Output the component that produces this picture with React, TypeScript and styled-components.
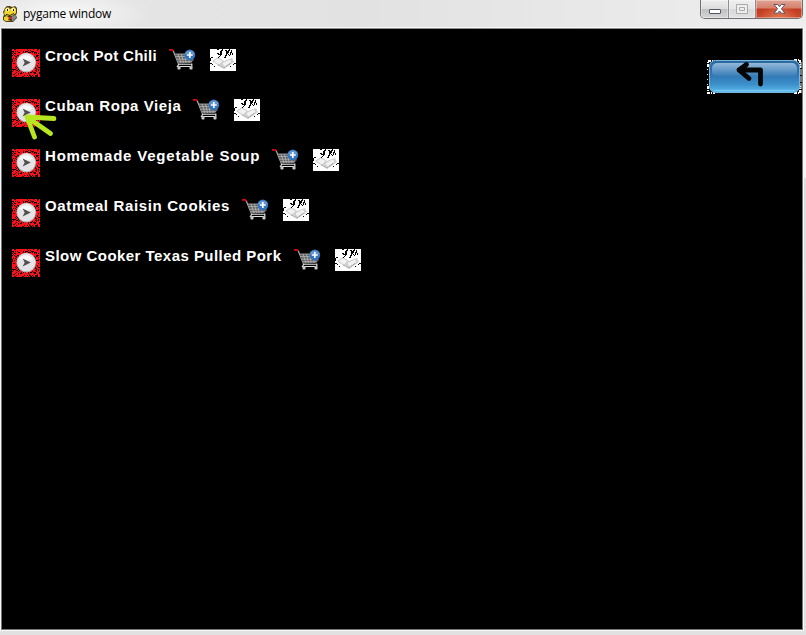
import React from 'react';
import styled, { createGlobalStyle } from 'styled-components';

const GlobalStyle = createGlobalStyle`
  * { box-sizing: border-box; }
  body { margin: 0; background: #e1e1e1; overflow: hidden; }
`;

const Window = styled.div`
  width: 806px;
  height: 635px;
  display: flex;
  flex-direction: column;
  background: linear-gradient(#f0f0f0 0, #f5f5f5 177px, #dcdcdc 179px, #e1e1e1 100%);
`;

const TitleBar = styled.header`
  height: 28px;
  flex: none;
  display: flex;
  align-items: flex-start;
  background:
    radial-gradient(ellipse 85px 24px at 66px 14px, rgba(255, 255, 255, 0.75), rgba(255, 255, 255, 0)),
    linear-gradient(90deg, #e6e6e6, #e2e2e2 45%, #eeeeee);
`;

const AppIcon = styled.svg`
  width: 16px;
  height: 18px;
  margin: 5px 0 0 2px;
`;

const WindowTitle = styled.div`
  margin: 6px auto 0 5px;
  font: 12px/16px "Open Sans", "Noto Sans", sans-serif;
  letter-spacing: -0.22px;
  color: #000;
`;

const Controls = styled.div`
  display: flex;
  width: 103px;
  height: 19px;
  margin-right: 3px;
  border: 1px solid #6e6e74;
  border-top: 0;
  border-radius: 0 0 5px 5px;
  overflow: hidden;
`;

const Control = styled.button<{ $kind: 'minimize' | 'maximize' | 'close' }>`
  width: ${p => (p.$kind === 'close' ? 46 : p.$kind === 'minimize' ? 28 : 27)}px;
  height: 18px;
  padding: 0;
  border: 0;
  border-right: ${p => (p.$kind === 'close' ? '0' : '1px solid #8d8d93')};
  background: ${p =>
    p.$kind === 'close'
      ? 'radial-gradient(ellipse at 50% 110%, #e37b55 0, rgba(220,90,50,0) 60%), linear-gradient(#e0a394 0, #d5806c 45%, #bf3a20 50%, #cf4c2d 100%)'
      : p.$kind === 'maximize'
        ? 'linear-gradient(#eeeeee, #e6e6e6 48%, #d9d9d9 52%, #e2e2e2)'
        : 'linear-gradient(#ededed, #dcdcdc 48%, #c0c0c2 52%, #d5d5d5)'};
  box-shadow: inset 0 0 0 1px rgba(255, 255, 255, 0.35);
  svg { display: block; width: 100%; height: 18px; }
`;

const Client = styled.main`
  width: 802px;
  height: 602px;
  margin-left: 1px;
  border: 1px solid #777;
  border-top-color: #8c8c8c;
  outline: 1px solid #f8f8f8;
  background: #000;
  display: flex;
  justify-content: space-between;
  align-items: flex-start;
`;

const RecipeList = styled.ul`
  list-style: none;
  margin: 0;
  padding: 20px 0 0 10px;
`;

const RecipeRow = styled.li`
  height: 50px;
  display: flex;
  align-items: flex-start;
`;

const PlaySlot = styled.div`
  position: relative;
  width: 28px;
  height: 28px;
  margin-right: 5px;
`;

const PlayIcon = styled.svg`
  display: block;
  width: 28px;
  height: 28px;
`;

const Pointer = styled.svg`
  position: absolute;
  left: 11px;
  top: 14px;
  width: 36px;
  height: 28px;
  z-index: 1;
`;

const RecipeName = styled.span<{ $width: number; $spacing: number }>`
  width: ${p => p.$width}px;
  margin-top: -2px;
  font: bold 15px/18px "Liberation Sans", Arial, sans-serif;
  letter-spacing: ${p => p.$spacing}px;
  white-space: nowrap;
  color: #fff;
`;

const CartIcon = styled.svg`
  width: 28px;
  height: 22px;
`;

const NoteIcon = styled.svg<{ $gap: number }>`
  width: 26px;
  height: 22px;
  margin-left: ${p => p.$gap}px;
`;

const BackButton = styled.button`
  width: 95px;
  height: 36px;
  margin-top: 30px;
  padding: 0;
  border: 0;
  background: none;
  svg { display: block; }
`;

const speckles = (() => {
  let seed = 7261;
  let d = '';
  for (let y = 0; y < 28; y++) {
    for (let x = 0; x < 28; x++) {
      seed = (seed * 1103515245 + 12345) % 2147483648;
      const edge = x < 3 || x > 24 || y < 3 || y > 24;
      if (((seed >> 8) % 100) < (edge ? 24 : 38)) d += `M${x} ${y}h1v1h-1z`;
    }
  }
  return d;
})();

const Play = () => (
  <PlayIcon viewBox="0 0 28 28">
    <path fill="#fb1018" d="M0 0h28v28H0z" />
    <path fill="#170003" shapeRendering="crispEdges" d={speckles} />
    <circle cx="14.3" cy="13.6" r="9.9" fill="#b8b0b2" />
    <circle cx="14.3" cy="13.3" r="9" fill="#e4e4e6" />
    <path fill="#f8f8f8" d="M7 10a8.5 8.5 0 0 1 14 0q-7 3-14 0z" />
    <path fill="#505050" d="M10.6 9.4l8.2 4-8.2 4.2 2.1-4.2z" />
  </PlayIcon>
);

const Cart = () => (
  <CartIcon viewBox="0 0 28 22">
    <path d="M0 .8h2.8l1.7 1.3" stroke="#d80b12" strokeWidth="1.8" fill="none" />
    <path d="M4.3 2l5.4 13.3h13" stroke="#aaa" strokeWidth="1.2" fill="none" />
    <path d="M6 5h15l4 6-3.5 3.2-12 .8z" fill="#606060" />
    <path d="M6 5h14M7 7.6h15M8 10.2h15M9 12.7h14M9 5l3 9M12.5 5l2 9M16 5l1 9M20 5v9" stroke="#b8b8b8" strokeWidth=".8" />
    <path d="M10 14.8l-1.5 2.7h14.3v-3" stroke="#e0e0e0" strokeWidth="1.2" fill="none" />
    <circle cx="10" cy="19" r="1.8" fill="#aaa" /><circle cx="22" cy="19" r="1.8" fill="#aaa" />
    <circle cx="10" cy="19" r=".8" fill="#eee" /><circle cx="22" cy="19" r=".8" fill="#eee" />
    <circle cx="20.8" cy="6" r="5.4" fill="#3474bd" />
    <path d="M15.9 5.3a5.1 5.1 0 0 1 9.8 0q-4-1-9.8 0z" fill="#6296d0" />
    <path d="M17.8 6h6M20.8 3v6" stroke="#fff" strokeWidth="1.7" />
  </CartIcon>
);

const Note = ({ gap }: { gap: number }) => (
  <NoteIcon $gap={gap} viewBox="0 0 26 22">
    <path fill="#fff" d="M0 0h26v22H0z" />
    <path d="M2 12l6-4 6 4 8-3 2 4-10 7z" fill="#d2d2d2" />
    <path d="M3 12l5-3 5 3-4 4zM12 14l8-4 2 3-8 5z" fill="#f2f2f2" stroke="#b5b5b5" strokeWidth=".4" />
    <path d="M8 16l6 3 7-5" stroke="#8a8a8a" strokeWidth=".7" strokeDasharray="2 1" fill="none" />
    <path d="M13 0l-2 3v3l-3 3M8 4l1 2M20 0l-3 4-2 5M16 3h3M18 5l2 2" stroke="#000" strokeWidth="1.4" fill="none" shapeRendering="crispEdges" />
    <path fill="#000" shapeRendering="crispEdges" d="M7 0h2v1H7zM15 1h2v1h-2zM21 1h1v3h-1zM22 4h1v2h-1zM20 3h1v3h-1zM0 9h1v3H0zM1 8h2v1H1zM0 14h2v1H0zM2 15h1v1H2zM24 14h2v1h-2zM23 15h1v1h-1zM4 17h1v1H4zM20 17h1v1h-1z" />
  </NoteIcon>
);

const recipes = [
  { name: 'Crock Pot Chili', width: 124, spacing: 0.3, gap: 13 },
  { name: 'Cuban Ropa Vieja', width: 148, spacing: 0.57, gap: 13 },
  { name: 'Homemade Vegetable Soup', width: 227, spacing: 0.8, gap: 13 },
  { name: 'Oatmeal Raisin Cookies', width: 197, spacing: 0.64, gap: 13 },
  { name: 'Slow Cooker Texas Pulled Pork', width: 249, spacing: 0.46, gap: 13 },
];

export default function App() {
  return (
    <>
      <GlobalStyle />
      <Window>
        <TitleBar>
          <AppIcon viewBox="0 0 16 18">
            <path d="M3 3l2-2h3l2 1 3-1 2 2v5l-1 2 1 3-4 4H4l-3-2v-3l1-2-1-3z" fill="#4a411c" />
            <path d="M3 4l3-2 2 2 4-2 2 2v4l-4 3H5L2 9zM2 12l3-1 2 2-1 2 3 1H4l-2-1z" fill="#efd42f" />
            <circle cx="5.5" cy="4.7" r="1.8" fill="#fff6b8" /><circle cx="11.3" cy="4.5" r="1.8" fill="#fff6b8" />
            <path d="M5 4h1v2H5zM11 4h1v2h-1zM4 9l4 1 4-2v1l-4 2-4-1z" fill="#25200e" />
            <path d="M7 12h3v2H7z" fill="#cf2635" /><path d="M10 11l4-1v3l-3 3h-1z" fill="#858585" />
          </AppIcon>
          <WindowTitle>pygame window</WindowTitle>
          <Controls>
            <Control $kind="minimize" aria-label="Minimize">
              <svg viewBox="0 0 27 18"><rect x="8.5" y="9.5" width="11" height="4" rx=".5" fill="#fff" stroke="#545769" /></svg>
            </Control>
            <Control $kind="maximize" aria-label="Maximize">
              <svg viewBox="0 0 26 18"><path d="M7.5 4.5h11v9h-11zM10.5 7.5h5v3h-5z" fill="#eee" stroke="#aaa" /></svg>
            </Control>
            <Control $kind="close" aria-label="Close">
              <svg viewBox="0 0 46 18"><path d="M18 4.5h3.6l1.9 2.2 1.9-2.2H29l-3.6 4.3 3.6 4.4h-3.6l-1.9-2.3-1.9 2.3H18l3.6-4.4z" fill="#fff" stroke="#555568" strokeWidth="1" /></svg>
            </Control>
          </Controls>
        </TitleBar>
        <Client>
          <RecipeList>
            {recipes.map((r, i) => (
              <RecipeRow key={r.name}>
                <PlaySlot>
                  <Play />
                  {i === 1 && (
                    <Pointer viewBox="0 0 36 28">
                      <path d="M4 4l27 1.5M4 4l23.5 16.5M4 4l7.5 20" stroke="#b7e51f" strokeWidth="4.8" strokeLinecap="round" fill="none" />
                    </Pointer>
                  )}
                </PlaySlot>
                <RecipeName $width={r.width} $spacing={r.spacing}>{r.name}</RecipeName>
                <Cart />
                <Note gap={r.gap} />
              </RecipeRow>
            ))}
          </RecipeList>
          <BackButton aria-label="Back">
            <svg width="95" height="36" viewBox="0 0 95 36">
              <defs>
                <linearGradient id="body" x2="0" y2="1">
                  <stop stopColor="#2b689e" /><stop offset=".45" stopColor="#2f75b3" />
                  <stop offset=".75" stopColor="#3c91cb" /><stop offset="1" stopColor="#62bdec" />
                </linearGradient>
                <linearGradient id="gloss" x2="0" y2="1">
                  <stop stopColor="#94b9da" /><stop offset="1" stopColor="#3279b6" />
                </linearGradient>
              </defs>
              <path d="M1 8V2h7M87 1h6v8M1 27v7h7M87 34h6v-7" fill="none" stroke="#fff" strokeWidth="2" strokeDasharray="3 1 1 1" />
              <path d="M.5 10v17" stroke="#eee" strokeWidth="1" strokeDasharray="1 4" />
              <path d="M94 3v31" stroke="#eee" strokeWidth="1" strokeDasharray="6 1" />
              <rect x="2.5" y="1.5" width="90" height="32" rx="6" fill="url(#body)" stroke="#76b6dc" />
              <rect x="5" y="4" width="85" height="14" rx="5" fill="url(#gloss)" />
              <path d="M7 31.5h81" stroke="#79ccf1" strokeWidth="1.2" />
              <path d="M39.5 5.5L32 11l10 8.5M32 11h21.5v14" fill="none" stroke="#050505" strokeWidth="4.8" strokeLinecap="round" strokeLinejoin="round" />
            </svg>
          </BackButton>
        </Client>
      </Window>
    </>
  );
}
